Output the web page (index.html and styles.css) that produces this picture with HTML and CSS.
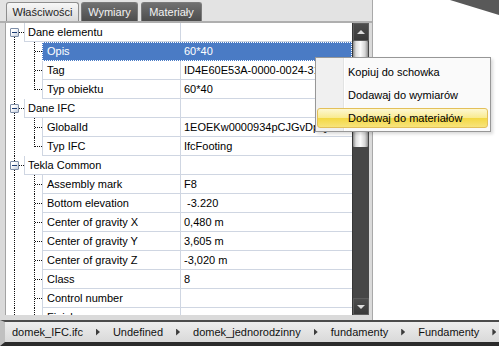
FILE: index.html
```html
<!DOCTYPE html>
<html lang="pl">

<head>
    <meta charset="UTF-8">
    <title>Właściwości</title>
    <link rel="stylesheet" href="styles.css">
</head>
<body>
    <div class="workspace">
        <section class="panel">
            <div class="tabs">
                <div class="tab active tab-props">Właściwości</div>
                <div class="tab tab-dims">Wymiary</div>
                <div class="tab tab-mats">Materiały</div>
            </div>
            <div class="frame">
                <div class="grid">
                    <div class="rows">
                        <div class="row group">
                            <div class="tree"><span class="pad-s"></span><span class="node"><i class="stem-top"></i><b class="box"></b><i class="stem-bottom"></i></span><span class="hline"></span></div>
                            <div class="cells"><div class="name">Dane elementu</div><div class="value"></div></div>
                        </div>
                        <div class="row item selected">
                            <div class="tree"><span class="pad-l"></span><span class="vline"></span><span class="branch"><i class="tick"></i></span></div>
                            <div class="cells"><div class="name">Opis</div><div class="value">60*40</div></div>
                        </div>
                        <div class="row item">
                            <div class="tree"><span class="pad-l"></span><span class="vline"></span><span class="branch"><i class="tick"></i></span></div>
                            <div class="cells"><div class="name">Tag</div><div class="value">ID4E60E53A-0000-0024-3100-000000000000</div></div>
                        </div>
                        <div class="row item">
                            <div class="tree"><span class="pad-l"></span><span class="vline"></span><span class="branch last"><i class="tick"></i></span></div>
                            <div class="cells"><div class="name">Typ obiektu</div><div class="value">60*40</div></div>
                        </div>
                        <div class="row group">
                            <div class="tree"><span class="pad-s"></span><span class="node"><i class="stem-top on"></i><b class="box"></b><i class="stem-bottom"></i></span><span class="hline"></span></div>
                            <div class="cells"><div class="name">Dane IFC</div><div class="value"></div></div>
                        </div>
                        <div class="row item">
                            <div class="tree"><span class="pad-l"></span><span class="vline"></span><span class="branch"><i class="tick"></i></span></div>
                            <div class="cells"><div class="name">GlobalId</div><div class="value">1EOEKw0000934pCJGvDpQF</div></div>
                        </div>
                        <div class="row item">
                            <div class="tree"><span class="pad-l"></span><span class="vline"></span><span class="branch last"><i class="tick"></i></span></div>
                            <div class="cells"><div class="name">Typ IFC</div><div class="value">IfcFooting</div></div>
                        </div>
                        <div class="row group">
                            <div class="tree"><span class="pad-s"></span><span class="node"><i class="stem-top on"></i><b class="box"></b><i class="stem-bottom"></i></span><span class="hline"></span></div>
                            <div class="cells"><div class="name">Tekla Common</div><div class="value"></div></div>
                        </div>
                        <div class="row item">
                            <div class="tree"><span class="pad-l"></span><span class="vline"></span><span class="branch"><i class="tick"></i></span></div>
                            <div class="cells"><div class="name">Assembly mark</div><div class="value">F8</div></div>
                        </div>
                        <div class="row item">
                            <div class="tree"><span class="pad-l"></span><span class="vline"></span><span class="branch"><i class="tick"></i></span></div>
                            <div class="cells"><div class="name">Bottom elevation</div><div class="value">&nbsp;-3.220</div></div>
                        </div>
                        <div class="row item">
                            <div class="tree"><span class="pad-l"></span><span class="vline"></span><span class="branch"><i class="tick"></i></span></div>
                            <div class="cells"><div class="name">Center of gravity X</div><div class="value">0,480 m</div></div>
                        </div>
                        <div class="row item">
                            <div class="tree"><span class="pad-l"></span><span class="vline"></span><span class="branch"><i class="tick"></i></span></div>
                            <div class="cells"><div class="name">Center of gravity Y</div><div class="value">3,605 m</div></div>
                        </div>
                        <div class="row item">
                            <div class="tree"><span class="pad-l"></span><span class="vline"></span><span class="branch"><i class="tick"></i></span></div>
                            <div class="cells"><div class="name">Center of gravity Z</div><div class="value">-3,020 m</div></div>
                        </div>
                        <div class="row item">
                            <div class="tree"><span class="pad-l"></span><span class="vline"></span><span class="branch"><i class="tick"></i></span></div>
                            <div class="cells"><div class="name">Class</div><div class="value">8</div></div>
                        </div>
                        <div class="row item">
                            <div class="tree"><span class="pad-l"></span><span class="vline"></span><span class="branch"><i class="tick"></i></span></div>
                            <div class="cells"><div class="name">Control number</div><div class="value"></div></div>
                        </div>
                        <div class="row item">
                            <div class="tree"><span class="pad-l"></span><span class="vline"></span><span class="branch"><i class="tick"></i></span></div>
                            <div class="cells"><div class="name">Finish</div><div class="value"></div></div>
                        </div>
                    </div>
                    <div class="scrollbar">
                        <div class="sb-btn"><span class="arrow-up"></span></div>
                        <div class="sb-thumb"></div>
                        <div class="sb-track"></div>
                        <div class="sb-btn sb-down"><span class="arrow-down"></span></div>
                    </div>
                </div>
            </div>
        </section>
        <div class="viewport">
            <svg width="49" height="15" viewBox="0 0 49 15"><polygon points="0,0 49,0 49,15" fill="#595959"/></svg>
        </div>
    </div>

    <nav class="breadcrumb">
        <span>domek_IFC.ifc</span><i class="sep"></i>
        <span>Undefined</span><i class="sep"></i>
        <span>domek_jednorodzinny</span><i class="sep"></i>
        <span>fundamenty</span><i class="sep"></i>
        <span>Fundamenty</span><i class="sep"></i>
    </nav>

    <ul class="context-menu">
        <li>Kopiuj do schowka</li>
        <li>Dodawaj do wymiarów</li>
        <li class="hover">Dodawaj do materiałów</li>
    </ul>
</body>

</html>
```

FILE: styles.css
```css
* {
    box-sizing: border-box;
}

body {
    font-family: "Liberation Sans", Arial, sans-serif;
    font-size: 11px;
    color: #000;
    margin: 0;
    width: 499px;
    height: 346px;
    overflow: hidden;
    position: relative;
    background-color: #fff;
}

.workspace {
    display: flex;
    height: 320px;
}

.panel {
    width: 373px;
    display: flex;
    flex-direction: column;
    background-color: #e3e3e3;
    border-right: 1px solid #a9a9a9;
}

.tabs {
    height: 21px;
    flex: none;
    display: flex;
    gap: 2px;
    padding: 2px 0 0 6px;
}

.tab {
    height: 19px;
    line-height: 18px;
    text-align: center;
    border: 1px solid #7a7a7a;
    border-bottom: none;
    border-radius: 3px 3px 0 0;
    background: linear-gradient(#707070, #4d4d4d);
    color: #f2f2f2;
}

.tab.active {
    background: linear-gradient(#f7f7f7, #dadada);
    border-color: #8e8e8e;
    color: #1e1e1e;
}

.tab-props {
    width: 73px;
}

.tab-dims {
    width: 57px;
}

.tab-mats {
    width: 61px;
    margin-left: 1px;
}

.frame {
    flex: 1;
    min-height: 0;
    overflow: hidden;
    display: flex;
    border-top: 2px solid #afafaf;
    padding: 0 3px 5px 5px;
    background-color: #dadada;
}

.grid {
    flex: 1;
    display: flex;
    border-left: 1px solid #a3a3a3;
    background-color: #fff;
}

.rows {
    width: 346px;
    overflow: hidden;
}

.row {
    display: flex;
    height: 19px;
}

/* tree connectors */
.tree {
    display: flex;
    flex: none;
}

.pad-s {
    width: 4px;
}

.pad-l {
    width: 8px;
}

.node {
    width: 9px;
    display: flex;
    flex-direction: column;
}

.stem-top {
    height: 5px;
    margin-left: 4px;
}

.stem-top.on {
    border-left: 1px dotted #111;
}

.stem-bottom {
    flex: 1;
    margin-left: 4px;
    border-left: 1px dotted #111;
}

.box {
    width: 9px;
    height: 9px;
    border: 1px solid #7c8ca6;
    border-radius: 1px;
    background: linear-gradient(135deg, #ffffff 30%, #c3cddc);
    display: flex;
    align-items: center;
    justify-content: center;
}

.box::before {
    content: "";
    width: 5px;
    height: 1px;
    background-color: #1c3b73;
}

.hline {
    width: 5px;
    height: 10px;
    border-bottom: 1px dotted #111;
}

.vline {
    width: 20px;
    border-left: 1px dotted #111;
}

.branch {
    width: 8px;
    border-left: 1px dotted #111;
}

.tick {
    display: block;
    height: 10px;
    border-bottom: 1px dotted #111;
}

.branch.last {
    border-left: none;
}

.branch.last .tick {
    border-left: 1px dotted #111;
}

/* cells */
.cells {
    flex: 1;
    display: flex;
    min-width: 0;
}

.name,
.value {
    line-height: 18px;
    white-space: nowrap;
    overflow: hidden;
    border-left: 1px solid #cfd6e2;
    border-bottom: 1px solid #cfd6e2;
}

.name {
    flex: 1;
    padding-left: 4px;
}

.group .name {
    padding-left: 3px;
}

.value {
    width: 172px;
    flex: none;
    padding-left: 3px;
}

.selected .cells {
    background-color: #4a7bc5;
    color: #fff;
    outline: 1px dotted #fff;
    outline-offset: -1px;
}

.selected .name,
.selected .value {
    border-color: #4a7bc5;
}

/* scrollbar */
.scrollbar {
    width: 17px;
    display: flex;
    flex-direction: column;
    background-color: #464646;
    border-left: 1px solid #363636;
}

.sb-btn {
    height: 18px;
    flex: none;
    display: flex;
    align-items: center;
    justify-content: center;
    background: linear-gradient(#4d4d4d, #393939);
    border: 1px solid #5c5c5c;
}

.sb-down {
    height: 17px;
}

.arrow-up {
    border-left: 4px solid transparent;
    border-right: 4px solid transparent;
    border-bottom: 4px solid #dcdcdc;
}

.arrow-down {
    border-left: 4px solid transparent;
    border-right: 4px solid transparent;
    border-top: 4px solid #dcdcdc;
}

.sb-thumb {
    height: 106px;
    flex: none;
    margin: 0 1px 0 0;
    border-radius: 1px;
    background: linear-gradient(to right, #8a8a8a, #dedede 20%, #fbfbfb 50%, #d6d6d6 80%, #8e8e8e);
}

.sb-track {
    flex: 1;
}

.viewport {
    flex: 1;
    display: flex;
    justify-content: flex-end;
    align-items: flex-start;
    background-color: #fff;
}

/* breadcrumb bar */
.breadcrumb {
    height: 26px;
    display: flex;
    align-items: center;
    gap: 13px;
    padding-left: 7px;
    border-top: 2px solid #4b4b4b;
    border-bottom: 4px solid #2b2b2b;
    border-left: 5px solid #c0c0c0;
    background: linear-gradient(#ededed, #d9d9d9);
    color: #111;
}

.breadcrumb .sep {
    width: 4px;
    height: 7px;
    background-color: #3c3c3c;
    clip-path: polygon(0 0, 100% 50%, 0 100%);
}

/* context menu */
.context-menu {
    position: absolute;
    left: 315px;
    top: 57px;
    width: 176px;
    margin: 0;
    padding: 4px 0 3px;
    list-style: none;
    border: 1px solid #979797;
    background: linear-gradient(to right, #f0f0f0 0 27px, #e2e3e3 27px 28px, #ffffff 28px 29px, #fafafa 29px);
    box-shadow: 2px 2px 3px rgba(0, 0, 0, 0.15);
}

.context-menu li {
    height: 20px;
    line-height: 18px;
    margin: 0 2px 3px 1px;
    padding-left: 30px;
    border: 1px solid transparent;
    border-radius: 3px;
}

.context-menu li:last-child {
    margin-bottom: 0;
}

.context-menu li.hover {
    background: linear-gradient(#fdf8d2, #f9ea8e 50%, #f3d844 52%, #f8e47c);
    border-color: #e3c05a;
}
```
